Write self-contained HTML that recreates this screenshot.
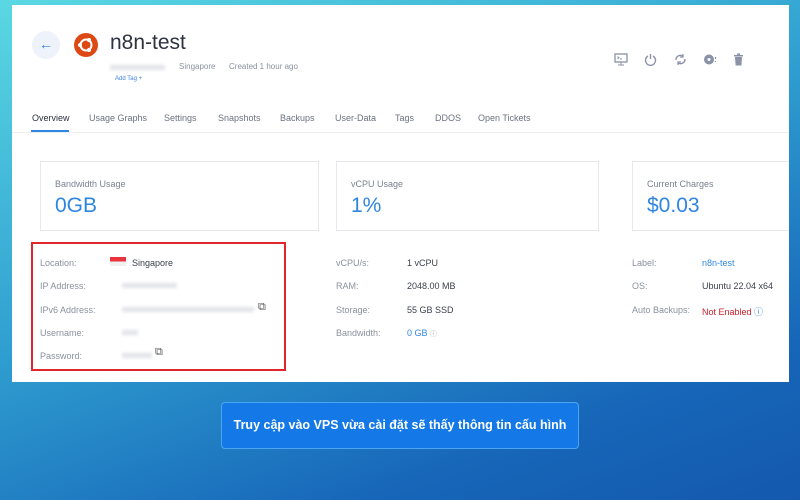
<!DOCTYPE html>
<html><head><meta charset="utf-8"><style>
*{margin:0;padding:0;box-sizing:border-box}
body{width:800px;height:500px;overflow:hidden;position:relative;font-family:"Liberation Sans",sans-serif;background:linear-gradient(160deg,#5ad8e2 0%,#2f9ed0 45%,#1766b9 80%,#1459ad 100%)}
.p{position:absolute;left:12px;top:5px;width:777px;height:377px;background:#fff;overflow:hidden}
.a{position:absolute;white-space:nowrap}
.lbl{color:#8a919e;font-size:9px}
.val{color:#3a3f4a;font-size:9px}
.card{position:absolute;top:156px;height:70px;border:1px solid #e6e8ec;background:#fff}
.card .t{position:absolute;left:14px;top:17px;font-size:9px;color:#7b8290}
.card .v{position:absolute;left:14px;top:32px;font-size:21px;color:#2f86e0}
.tab{position:absolute;top:108px;font-size:9px;color:#6b7280}
.blur{background:#e2e4e9;filter:blur(1.5px);height:5px;position:absolute}
.ic{position:absolute;top:48px}
</style></head><body>
<div class="p">
 <div class="a" style="left:20px;top:26px;width:28px;height:28px;border-radius:50%;background:#eef2fb;color:#2f7de0;font-size:14px;text-align:center;line-height:27px">←</div>
 <svg class="a" style="left:62px;top:28px" width="24" height="24" viewBox="0 0 24 24"><circle cx="12" cy="12" r="12" fill="#dd4814"/><circle cx="12" cy="12" r="5.5" fill="none" stroke="#fff" stroke-width="2"/><circle cx="6" cy="12" r="2" fill="#fff"/><circle cx="15" cy="7" r="2" fill="#fff"/><circle cx="15" cy="17" r="2" fill="#fff"/></svg>
 <div class="a" style="left:98px;top:26px;font-size:21px;color:#2e3340">n8n-test</div>
 <div class="blur" style="left:98px;top:60px;width:55px"></div>
 <div class="a" style="left:167px;top:57px;font-size:8px;color:#8a919e">Singapore</div>
 <div class="a" style="left:217px;top:57px;font-size:8px;color:#8a919e">Created 1 hour ago</div>
 <div class="a" style="left:103px;top:71px;font-size:6px;color:#3b82e0">Add Tag +</div>
 <svg class="ic" style="left:602px" width="14" height="13" viewBox="0 0 14 13"><rect x="1" y="1" width="12" height="8" fill="none" stroke="#8a92a8" stroke-width="1.3"/><path d="M4 12h6M7 9v3M3.5 3.5l1.5 1.2-1.5 1.2M6 6h2" stroke="#8a92a8" stroke-width="1" fill="none"/></svg>
 <svg class="ic" style="left:632px" width="13" height="13" viewBox="0 0 13 13"><path d="M4 3a5 5 0 1 0 5 0M6.5 1v5" stroke="#8a92a8" stroke-width="1.4" fill="none"/></svg>
 <svg class="ic" style="left:662px" width="13" height="13" viewBox="0 0 13 13"><path d="M2 7a4.5 4.5 0 0 1 7.5-3.5M11 6a4.5 4.5 0 0 1-7.5 3.5" stroke="#8a92a8" stroke-width="1.4" fill="none"/><path d="M9 1v3h-3M4 12V9h3" stroke="#8a92a8" stroke-width="1.2" fill="none"/></svg>
 <svg class="ic" style="left:691px" width="14" height="13" viewBox="0 0 14 13"><circle cx="6" cy="6.5" r="5" fill="#8a92a8"/><circle cx="6" cy="6.5" r="1.5" fill="#fff"/><path d="M12.5 4v2M12.5 8v1" stroke="#8a92a8" stroke-width="1.2"/></svg>
 <svg class="ic" style="left:721px" width="11" height="13" viewBox="0 0 11 13"><rect x="1" y="2" width="9" height="1.5" fill="#8a92a8"/><rect x="4" y="0.5" width="3" height="1.5" fill="#8a92a8"/><path d="M2 4h7l-.6 8.5H2.6z" fill="#8a92a8"/></svg>
 <div class="tab" style="left:20px;color:#2e3340">Overview</div>
 <div class="a" style="left:19px;top:125px;width:38px;height:2px;background:#2f86e0"></div>
 <div class="tab" style="left:77px">Usage Graphs</div>
 <div class="tab" style="left:152px">Settings</div>
 <div class="tab" style="left:206px">Snapshots</div>
 <div class="tab" style="left:268px">Backups</div>
 <div class="tab" style="left:323px">User-Data</div>
 <div class="tab" style="left:383px">Tags</div>
 <div class="tab" style="left:423px">DDOS</div>
 <div class="tab" style="left:466px">Open Tickets</div>
 <div class="a" style="left:0;top:127px;width:777px;height:1px;background:#eceef1"></div>
 <div class="card" style="left:28px;width:279px"><div class="t">Bandwidth Usage</div><div class="v">0GB</div></div>
 <div class="card" style="left:324px;width:263px"><div class="t">vCPU Usage</div><div class="v">1%</div></div>
 <div class="card" style="left:620px;width:200px"><div class="t">Current Charges</div><div class="v">$0.03</div></div>
 <div class="a" style="left:19px;top:237px;width:255px;height:129px;border:2px solid #e0262b"></div>
 <div class="a lbl" style="left:28px;top:253px">Location:</div>
 <div class="a" style="left:98px;top:252px;width:16px;height:9px;background:linear-gradient(#e8343a 50%,#f1f1f1 50%)"></div>
 <div class="a val" style="left:120px;top:253px">Singapore</div>
 <div class="a lbl" style="left:28px;top:276px">IP Address:</div>
 <div class="blur" style="left:110px;top:278px;width:55px"></div>
 <div class="a lbl" style="left:28px;top:300px">IPv6 Address:</div>
 <div class="blur" style="left:110px;top:302px;width:132px"></div>
 <div class="a" style="left:246px;top:296px;font-size:11px;color:#555">⧉</div>
 <div class="a lbl" style="left:28px;top:323px">Username:</div>
 <div class="blur" style="left:110px;top:325px;width:16px"></div>
 <div class="a lbl" style="left:28px;top:346px">Password:</div>
 <div class="blur" style="left:110px;top:348px;width:30px"></div>
 <div class="a" style="left:143px;top:341px;font-size:11px;color:#555">⧉</div>
 <div class="a lbl" style="left:324px;top:253px">vCPU/s:</div><div class="a val" style="left:395px;top:253px">1 vCPU</div>
 <div class="a lbl" style="left:324px;top:276px">RAM:</div><div class="a val" style="left:395px;top:276px">2048.00 MB</div>
 <div class="a lbl" style="left:324px;top:300px">Storage:</div><div class="a val" style="left:395px;top:300px">55 GB SSD</div>
 <div class="a lbl" style="left:324px;top:323px">Bandwidth:</div><div class="a val" style="left:395px;top:323px;color:#2f86e0">0 GB <span style="color:#aaa;font-size:7px">ⓘ</span></div>
 <div class="a lbl" style="left:620px;top:253px">Label:</div><div class="a val" style="left:690px;top:253px;color:#2f86e0">n8n-test</div>
 <div class="a lbl" style="left:620px;top:276px">OS:</div><div class="a val" style="left:690px;top:276px">Ubuntu 22.04 x64</div>
 <div class="a lbl" style="left:620px;top:300px">Auto Backups:</div><div class="a val" style="left:690px;top:300px;color:#c8202a">Not Enabled <span style="color:#2f86e0">ⓘ</span></div>
</div>
<div class="a" style="left:221px;top:402px;width:358px;height:47px;background:#1479e6;border:1px solid #4aa6f2;border-radius:4px;color:#fff;font-weight:bold;font-size:12.5px;text-align:center;line-height:45px">Truy cập vào VPS vừa cài đặt sẽ thấy thông tin cấu hình</div>
</body></html>
